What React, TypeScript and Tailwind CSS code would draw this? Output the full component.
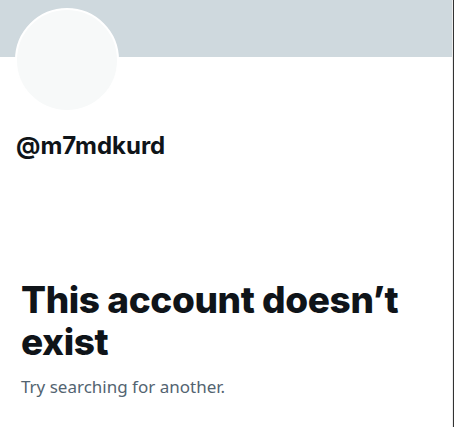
import React from "react";

export default function App() {
  return (
    <div className="w-[454px] h-[427px] bg-white overflow-hidden flex">
      <div className="flex-1 flex flex-col border-r border-[#ececec]">
        <div className="h-[57px] bg-[#cfd9de] w-full" />
        <div className="ml-[15px] -mt-[49px] w-[104px] h-[104px] rounded-full border-2 border-white bg-[#f7f9f9]" />
        <div
          className="ml-[16px] mt-[20px] text-[24px] leading-[28px] font-bold text-[#0f1419]"
          style={{ fontFamily: "Inter, 'Noto Sans', sans-serif" }}
        >
          @m7mdkurd
        </div>
        <div className="ml-[21px] mt-[119px] pr-4">
          <div
            className="text-[37px] leading-[42px] font-extrabold text-[#0f1419] tracking-[-0.4px]"
            style={{ fontFamily: "Inter, 'Noto Sans', sans-serif" }}
          >
            This account doesn’t exist
          </div>
          <div
            className="mt-[13px] text-[17px] leading-[22px] text-[#536471]"
            style={{ fontFamily: "'Noto Sans', 'Open Sans', sans-serif" }}
          >
            Try searching for another.
          </div>
        </div>
      </div>
      <div className="w-px bg-[#333333]" />
    </div>
  );
}
